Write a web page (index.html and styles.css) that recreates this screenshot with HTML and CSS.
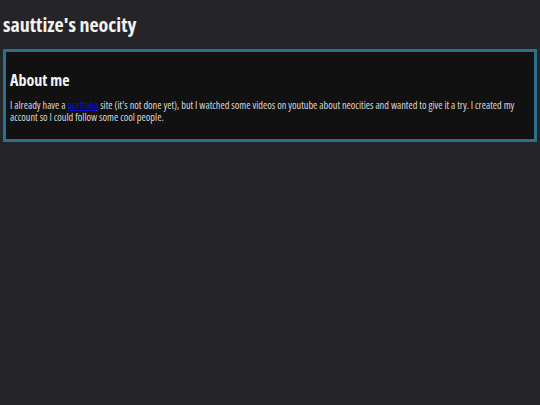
FILE: index.html
```html
<!DOCTYPE html>
<html>
<head>
<meta charset="utf-8">
<link rel="stylesheet" href="styles.css">
</head>
<body>
<h1 class="site-title">sauttize's neocity</h1>
<section class="box">
<h2 class="box-title">About me</h2>
<p class="box-text">I already have a <a href="#" class="link">portfolio</a> site (it's not done yet), but I watched some videos on youtube about neocities and wanted to give it a try. I created my account so I could follow some cool people.</p>
</section>
</body>
</html>
```
FILE: styles.css
```css
html, body {
  margin: 0;
  padding: 0;
  background: #252527;
  color: #eeeeee;
  font-family: "Open Sans", sans-serif;
  font-stretch: condensed;
}
body {
  padding: 13px 3px 0 3px;
}
.site-title {
  margin: 0 0 12px 0;
  font-size: 20px;
  line-height: 24px;
  font-weight: bold;
  color: #f2f2f2;
}
.box {
  border: 3px solid #2e6f8c;
  background: #111111;
  padding: 18px 13px 16px 4px;
}
.box-title {
  margin: 0 0 9px 0;
  font-size: 16px;
  line-height: 20px;
  font-weight: bold;
  color: #f5f5f5;
}
.box-text {
  margin: 0;
  font-size: 10.3px;
  line-height: 12px;
  color: #d8d8d8;
}
.link {
  color: #1010c8;
}
```
